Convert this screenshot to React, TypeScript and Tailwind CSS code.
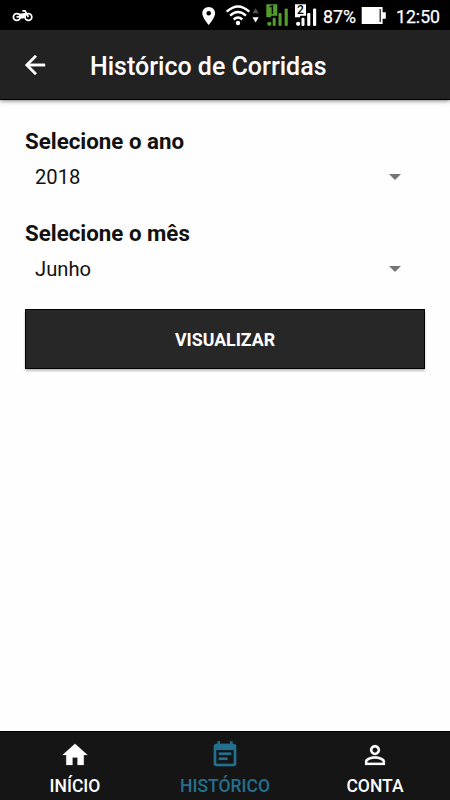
import React from "react";

function StatusBar() {
  return (
    <div className="h-[30px] shrink-0 bg-black text-white">
      <svg width="450" height="30" viewBox="0 0 450 30" className="block" style={{ fontFamily: "Roboto, sans-serif" }}>
        <g fill="none" stroke="#fff" strokeWidth="1.8">
          <circle cx="16.8" cy="17" r="3.4" />
          <circle cx="28.4" cy="17" r="3.4" />
          <path d="M16.5 16.8H22.5L26 13.8M22.4 10.9H25L28.4 17" strokeWidth="1.7" />
        </g>
        <path d="M15.5 13.6L21 13.4L25 12.9L26.6 14.6L23.5 18.6H20.8L20 15Z" fill="#fff" />
        <path
          fillRule="evenodd"
          fill="#fff"
          d="M208.7 7C205.1 7 202.3 9.8 202.3 13.3C202.3 18 208.7 25 208.7 25S215.1 18 215.1 13.3C215.1 9.8 212.3 7 208.7 7ZM208.7 15.6A2.3 2.3 0 1 1 208.7 11A2.3 2.3 0 0 1 208.7 15.6Z"
        />
        <g fill="none" stroke="#fff" strokeWidth="2.4">
          <path d="M226.7 11.6Q238 1.2 249.3 11.6" />
          <path d="M230.1 15.6Q238 8.4 245.9 15.6" />
          <path d="M233.7 19.5Q238 15.6 242.3 19.5" />
        </g>
        <circle cx="238" cy="23" r="2.2" fill="#fff" />
        <path d="M252.5 13.3L255.6 8.2L258.7 13.3Z" fill="#555" />
        <path d="M252.5 17.2L255.6 22.4L258.7 17.2Z" fill="#fff" />
        <g fill="#549b2b">
          <path d="M266.3 4.2H277.3V15.8H271V17.2H266.3Z" />
          <circle cx="269.3" cy="23.8" r="2.1" />
          <rect x="272.7" y="17.8" width="3" height="8.2" rx="1.2" />
          <rect x="278.5" y="13" width="3.1" height="13" rx="1.2" />
          <rect x="284.6" y="8.4" width="3.2" height="17.6" rx="1.2" />
        </g>
        <text x="271.8" y="14.4" fontSize="12" fontWeight="500" textAnchor="middle" fill="#000">1</text>
        <g fill="#fff">
          <path d="M295 4.2H306V15.8H300V17.2H295Z" />
          <circle cx="298.1" cy="23.8" r="2.1" />
          <rect x="301.5" y="17.8" width="3" height="8.2" rx="1.2" />
          <rect x="307.2" y="13" width="3.1" height="13" rx="1.2" />
          <rect x="313" y="8.4" width="3.2" height="17.6" rx="1.2" />
        </g>
        <text x="300.5" y="14.4" fontSize="12" fontWeight="500" textAnchor="middle" fill="#000">2</text>
        <text x="323" y="22.7" fontSize="17.5" textLength="33" lengthAdjust="spacingAndGlyphs" fill="#fff" stroke="#fff" strokeWidth="0.25">87%</text>
        <path d="M361.7 7H382.6V12.3H385.8V18.8H382.6V24H361.7Z" fill="#fff" />
        <path d="M380.2 9V22" stroke="#222" strokeWidth="1.3" />
        <text x="396" y="22.7" fontSize="17.5" textLength="44" lengthAdjust="spacingAndGlyphs" fill="#fff" stroke="#fff" strokeWidth="0.25">12:50</text>
      </svg>
    </div>
  );
}

function Icon({ d, weight = 0 }: { d: string; weight?: number }) {
  return (
    <svg width="30" height="30" viewBox="0 0 24 24" fill="currentColor" stroke="currentColor" strokeWidth={weight} className="block shrink-0">
      <path d={d} />
    </svg>
  );
}

const BACK = "M20 11H7.83l5.59-5.59L12 4l-8 8 8 8 1.41-1.41L7.83 13H20v-2z";
const HOME = "M10 20v-6h4v6h5v-8h3L12 3 2 12h3v8z";
const NOTE =
  "M17 10H7v2h10v-2zm2-7h-1V1h-2v2H8V1H6v2H5c-1.11 0-1.99.9-1.99 2L3 19c0 1.1.89 2 2 2h14c1.1 0 2-.9 2-2V5c0-1.1-.9-2-2-2zm0 16H5V8h14v11zm-5-5H7v2h7v-2z";
const PERSON =
  "M12 5.9c1.16 0 2.1.94 2.1 2.1s-.94 2.1-2.1 2.1S9.9 9.16 9.9 8s.94-2.1 2.1-2.1m0 9c2.97 0 6.1 1.46 6.1 2.1v1.1H5.9V17c0-.64 3.13-2.1 6.1-2.1M12 4C9.79 4 8 5.79 8 8s1.79 4 4 4 4-1.79 4-4-1.79-4-4-4zm0 9c-2.67 0-8 1.34-8 4v3h16v-3c0-2.66-5.33-4-8-4z";

function Field({ label, value }: { label: string; value: string }) {
  return (
    <div className="h-[92px]">
      <div className="h-[30px] text-[22.3px] leading-[28px] font-bold whitespace-nowrap">{label}</div>
      <div className="flex h-10 items-center justify-between pr-6 pl-2.5 text-[20.2px]">
        <span className="pt-px">{value}</span>
        <svg width="12" height="6" viewBox="0 0 12 6" className="block">
          <path d="M0 0H12L6 6Z" fill="#757575" />
        </svg>
      </div>
    </div>
  );
}

function Tab({ icon, label, active }: { icon: string; label: string; active?: boolean }) {
  return (
    <div className={`flex flex-1 flex-col items-center pt-2 ${active ? "text-[#24708f]" : "text-white"}`}>
      <Icon d={icon} weight={0.15} />
      <span className="mt-1 text-[17.5px] leading-6 font-medium">{label}</span>
    </div>
  );
}

export default function App() {
  return (
    <div className="flex h-[800px] w-[450px] flex-col overflow-hidden bg-[#fefefe] font-['Roboto',sans-serif] text-[#111]">
      <StatusBar />
      <header className="flex h-[70px] shrink-0 items-center border-b border-black bg-[#222] pl-5 text-white shadow-[0_1px_4px_rgba(0,0,0,0.5)]">
        <Icon d={BACK} weight={0.3} />
        <h1 className="ml-10 pt-1 text-[25px] leading-8 font-medium whitespace-nowrap">Histórico de Corridas</h1>
      </header>
      <main className="flex-1 px-[25px] pt-[27px]">
        <Field label="Selecione o ano" value="2018" />
        <Field label="Selecione o mês" value="Junho" />
        <button className="mt-[-2px] block h-[60px] w-full border border-black bg-[#272727] pt-0.5 text-[17.75px] font-bold text-white shadow-[0_2px_2px_rgba(0,0,0,0.25)]">
          VISUALIZAR
        </button>
      </main>
      <nav className="flex h-[69px] shrink-0 border-t border-black bg-[#151515]">
        <Tab icon={HOME} label="INÍCIO" />
        <Tab icon={NOTE} label="HISTÓRICO" active />
        <Tab icon={PERSON} label="CONTA" />
      </nav>
    </div>
  );
}
